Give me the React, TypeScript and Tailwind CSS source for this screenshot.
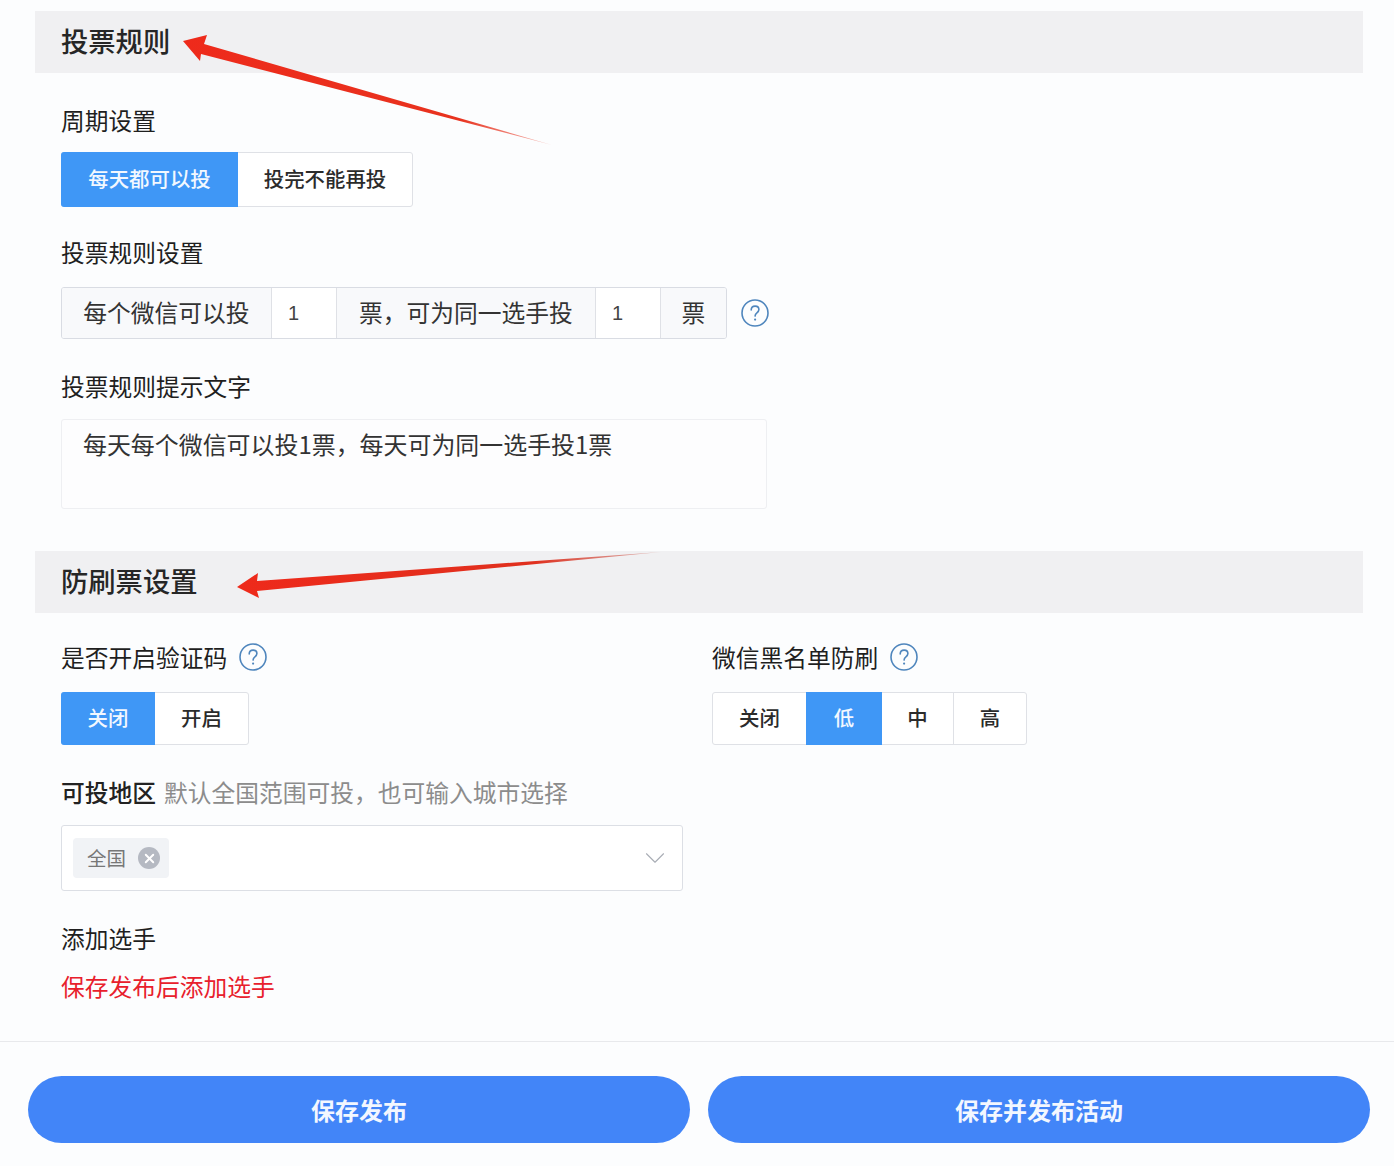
import React from "react";
import { ChevronDown, X } from "lucide-react";

const cjk = "font-['Noto_Sans_CJK_SC','Liberation_Sans',sans-serif]";

function Help() {
  return (
    <svg width="28" height="30" viewBox="0 0 28 30" fill="none" className="shrink-0">
      <circle cx="14" cy="15" r="13" stroke="#4f86bd" strokeWidth="1.6" />
      <path d="M10.2 12c0-2.4 1.7-3.9 3.9-3.9s3.8 1.5 3.8 3.5c0 1.5-.8 2.4-2 3.3-1.2.9-1.8 1.6-1.8 3.2" stroke="#4f86bd" strokeWidth="1.6" strokeLinecap="round" />
      <circle cx="14.1" cy="21.6" r="1.1" fill="#4f86bd" />
    </svg>
  );
}

function SectionHeader({ children, className }: { children: React.ReactNode; className: string }) {
  return (
    <div className={`ml-[35px] mr-[31px] h-[62px] bg-[#f0f0f2] pl-[26px] pb-[4px] flex items-center text-[27.3px] font-medium text-[#262626] ${className}`}>
      {children}
    </div>
  );
}

function Label({ children, className = "" }: { children: React.ReactNode; className?: string }) {
  return <div className={`h-8 pb-[3px] text-[23.75px] text-[#1f1f1f] flex items-center ${className}`}>{children}</div>;
}

function Seg({ items, active, h }: { items: [string, number][]; active: number; h: string }) {
  return (
    <div className={`flex ${h} w-fit rounded-[3px] border border-[#dfe1e6] text-[20.4px] font-medium text-[#2b2b2b] bg-white`}>
      {items.map(([t, w], i) => (
        <div
          key={t}
          style={{ width: w }}
          className={
            i === active
              ? `-my-px pb-[2px] flex items-center justify-center bg-[#3f97f6] text-[#f2f8ff] ${i === 0 ? "-ml-px rounded-l-[3px]" : ""}`
              : `pb-[2px] flex items-center justify-center ${i > active + 1 ? "border-l border-[#dfe1e6]" : ""}`
          }
        >
          {t}
        </div>
      ))}
    </div>
  );
}

function Addon({ w, children }: { w: string; children: React.ReactNode }) {
  return <div className={`${w} h-full pb-[2px] bg-[#f8f9fb] flex items-center justify-center text-[23.75px] text-[#333]`}>{children}</div>;
}

function NumInput() {
  return (
    <input
      readOnly
      value="1"
      className="w-[66px] h-full border-x border-[#dfe1e6] bg-white pl-4 text-[20px] text-[#444] outline-none font-['Liberation_Sans',sans-serif]"
    />
  );
}

export default function App() {
  return (
    <div className={`relative w-[1394px] h-[1166px] overflow-hidden bg-[#fcfdfe] pt-[11px] ${cjk}`}>
      <SectionHeader className="">投票规则</SectionHeader>

      <div className="pl-[61px]">
        <Label className="mt-8">周期设置</Label>
        <div className="mt-[15px]">
          <Seg items={[["每天都可以投", 177], ["投完不能再投", 174]]} active={0} h="h-[55px]" />
        </div>

        <Label className="mt-[30px]">投票规则设置</Label>
        <div className="mt-[18px] flex items-center gap-[14px]">
          <div className="flex h-[52px] w-[666px] rounded-[3px] border border-[#d9dce3] overflow-hidden">
            <Addon w="w-[209px]">每个微信可以投</Addon>
            <NumInput />
            <Addon w="w-[258px]">票，可为同一选手投</Addon>
            <NumInput />
            <Addon w="flex-1">票</Addon>
          </div>
          <Help />
        </div>

        <Label className="mt-8">投票规则提示文字</Label>
        <textarea
          readOnly
          value="每天每个微信可以投1票，每天可为同一选手投1票"
          className="mt-4 block w-[706px] h-[90px] resize-none rounded-[3px] border border-[#eeeff2] bg-[#fdfdfe] px-[21px] py-[6px] text-[23.95px] leading-[36px] text-[#333] outline-none"
        />
      </div>

      <SectionHeader className="mt-[42px]">防刷票设置</SectionHeader>

      <div className="pl-[61px]">
        <div className="mt-[29px] flex">
          <div className="w-[651px]">
            <Label className="gap-3">是否开启验证码 <Help /></Label>
            <div className="mt-[18px]">
              <Seg items={[["关闭", 94], ["开启", 93]]} active={0} h="h-[53px]" />
            </div>
          </div>
          <div>
            <Label className="gap-3">微信黑名单防刷 <Help /></Label>
            <div className="mt-[18px]">
              <Seg items={[["关闭", 93], ["低", 76], ["中", 71], ["高", 73]]} active={1} h="h-[53px]" />
            </div>
          </div>
        </div>

        <div className="mt-8 h-8 pb-[3px] text-[23.75px] flex items-center gap-2">
          <span className="font-medium text-[#222]">可投地区</span>
          <span className="text-[#8c8c8c]">默认全国范围可投，也可输入城市选择</span>
        </div>

        <div className="mt-4 flex h-[66px] w-[622px] items-center justify-between rounded-[3px] border border-[#dcdfe5] bg-white pl-[11px] pr-[10px]">
          <div className="flex h-10 w-[96px] items-center rounded-[4px] bg-[#f1f3f6] pl-[14px] text-[19.5px] text-[#777]">
            全国
            <span className="ml-[12px] flex h-[22px] w-[22px] items-center justify-center rounded-full bg-[#b5b9c2]">
              <X size={15} color="#fff" strokeWidth={3} />
            </span>
          </div>
          <ChevronDown size={34} color="#a9adb5" strokeWidth={0.8} />
        </div>

        <Label className="mt-8">添加选手</Label>
        <div className="mt-4 h-8 pb-[3px] flex items-center text-[23.75px] text-[#e8202c]">保存发布后添加选手</div>
      </div>

      <div className="mt-[38px] border-t border-[#e8e9ec] pt-[34px] px-[24px]">
        <div className="flex gap-[18px] pl-1">
          <button className="h-[67px] w-[662px] rounded-full bg-[#4285f8] text-[24px] font-bold text-[#f3f7ff]">保存发布</button>
          <button className="h-[67px] w-[662px] rounded-full bg-[#4285f8] text-[24px] font-bold text-[#f3f7ff]">保存并发布活动</button>
        </div>
      </div>

      <svg className="absolute inset-0 pointer-events-none" width="1394" height="1166" viewBox="0 0 1394 1166">
        <defs>
          <linearGradient id="a1" gradientUnits="userSpaceOnUse" x1="184" y1="41" x2="552" y2="145">
            <stop offset="0" stopColor="#ee2a1b" />
            <stop offset="0.75" stopColor="#e8331f" />
            <stop offset="1" stopColor="#e8331f" stopOpacity="0.3" />
          </linearGradient>
          <linearGradient id="a2" gradientUnits="userSpaceOnUse" x1="238" y1="587" x2="661" y2="552">
            <stop offset="0" stopColor="#ee2a1b" />
            <stop offset="0.7" stopColor="#e0301e" />
            <stop offset="1" stopColor="#c0392b" stopOpacity="0.3" />
          </linearGradient>
        </defs>
        <polygon points="183,41 207,35 204,44 552,145 201,54 200,61" fill="url(#a1)" />
        <polygon points="237,587 258,573 257,581 661,552 257,591 259,598" fill="url(#a2)" />
      </svg>
    </div>
  );
}
